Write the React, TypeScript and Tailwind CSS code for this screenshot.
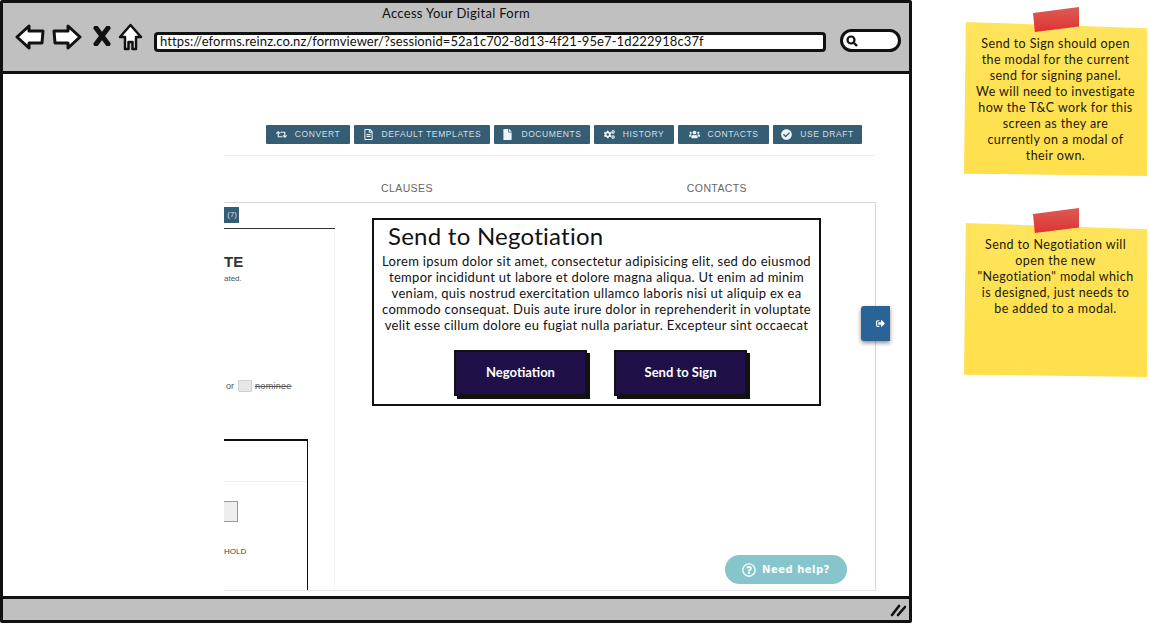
import { FaRetweet, FaRegFileAlt, FaFile, FaCogs, FaUsers, FaCheckCircle, FaSignOutAlt, FaRegQuestionCircle } from "react-icons/fa";
import type { ReactNode } from "react";

const sketch = { fontFamily: "Lato, 'Noto Sans', sans-serif" };
const liberation = { fontFamily: "'Liberation Sans', Arial, sans-serif" };

function ToolBtn({ icon, label, w }: { icon: ReactNode; label: string; w: string }) {
  return (
    <div className={`${w} h-[19px] bg-[#355e75] rounded-[1px] flex items-center justify-center gap-[8px] text-[#d5dfe5] text-[8.5px] tracking-[0.6px] whitespace-nowrap`}>
      <span className="text-[11px] text-[#eef3f6]">{icon}</span>
      <span>{label}</span>
    </div>
  );
}

function Note({ lines, mt, h }: { lines: string[]; mt: string; h: string }) {
  return (
    <div className={`relative ${mt} w-[183px] ${h}`}>
      <div className="absolute inset-0 bg-gradient-to-b from-[#ffe45c] via-[#ffe252] to-[#ffdf4c] [clip-path:polygon(1%_0,100%_4%,100%_100%,0_98.5%)]" />
      <div className="absolute left-[69px] top-[-15px] w-[46px] h-[25px] bg-gradient-to-b from-[#dd5a55] to-[#df2f2f] [clip-path:polygon(0_24%,100%_0,100%_78%,4%_100%)]" />
      <div className="relative pt-[14px] text-center text-[12.5px] leading-[16px] text-[#1c1a08] tracking-[0.4px]">
        {lines.map((l) => (
          <div key={l} className="whitespace-nowrap">{l}</div>
        ))}
      </div>
    </div>
  );
}

export default function App() {
  return (
    <div className="w-[1149px] h-[624px] bg-white flex overflow-hidden" style={sketch}>
      {/* browser window */}
      <div className="relative w-[912px] h-[623px] border-[3px] border-[#111] rounded-[2px] flex flex-col shrink-0">
        {/* top bar */}
        <div className="h-[71px] shrink-0 bg-[#c0c0c0] border-b-[3px] border-[#111] flex flex-col">
          <div className="h-[21px] pt-[1px] text-center text-[13px] leading-[18px] tracking-[0.3px] text-[#111]">Access Your Digital Form</div>
          <div className="flex items-center pl-[12px] h-[27px]">
            <svg width="30" height="28" viewBox="0 0 30 28" className="shrink-0 mb-[1px]">
              <path d="M2 14 L14 3 L14 8 L28 8 L27 20 L14 20 L14 25 Z" fill="#fff" stroke="#111" strokeWidth="3" strokeLinejoin="round" />
            </svg>
            <svg width="30" height="28" viewBox="0 0 30 28" className="ml-[7px] shrink-0 mb-[1px]">
              <path d="M28 14 L16 3 L16 8 L2 8 L3 20 L16 20 L16 25 Z" fill="#fff" stroke="#111" strokeWidth="3" strokeLinejoin="round" />
            </svg>
            <svg width="18" height="20" viewBox="0 0 18 20" className="ml-[11px] shrink-0 mb-[3px]">
              <path d="M3 2 L15 18 M15 2 L3 18" stroke="#111" strokeWidth="5" strokeLinecap="round" />
            </svg>
            <svg width="25" height="28" viewBox="0 0 25 28" className="ml-[7px] shrink-0 mb-[2px]">
              <path d="M12.5 2 L23 14 L18 14 L18 26 L14.5 26 L14.5 19 L10.5 19 L10.5 26 L7 26 L7 14 L2 14 Z" fill="#fff" stroke="#111" strokeWidth="2.5" strokeLinejoin="round" />
            </svg>
            <div className="ml-[11px] mt-[9px] w-[672px] h-[20px] bg-white border-[3px] border-[#111] rounded-[4px] flex items-center pl-[3px] text-[13px] tracking-[0.1px] text-[#111] whitespace-nowrap overflow-hidden">
              https://eforms.reinz.co.nz/formviewer/?sessionid=52a1c702-8d13-4f21-95e7-1d222918c37f
            </div>
            <div className="ml-[14px] mt-[6px] w-[61px] h-[23px] bg-white border-[3px] border-[#111] rounded-full flex items-center pl-[3px]">
              <svg width="12" height="12" viewBox="0 0 12 12">
                <circle cx="5" cy="5" r="3.5" fill="none" stroke="#111" strokeWidth="2.2" />
                <path d="M8 8 L11 11" stroke="#111" strokeWidth="2.4" />
              </svg>
            </div>
          </div>
        </div>

        {/* page body */}
        <div className="relative flex-1 bg-white overflow-hidden pl-[221px] pr-[33px] pt-[51px]" style={liberation}>
          <div className="flex justify-end gap-[4px] pr-[14px] pl-[42px]">
            <ToolBtn w="w-[84px]" label="CONVERT" icon={<FaRetweet />} />
            <ToolBtn w="w-[136px]" label="DEFAULT TEMPLATES" icon={<FaRegFileAlt />} />
            <ToolBtn w="w-[96px]" label="DOCUMENTS" icon={<FaFile />} />
            <ToolBtn w="w-[80px]" label="HISTORY" icon={<FaCogs />} />
            <ToolBtn w="w-[91px]" label="CONTACTS" icon={<FaUsers />} />
            <ToolBtn w="w-[89px]" label="USE DRAFT" icon={<FaCheckCircle />} />
          </div>
          <div className="mt-[11px] border-t border-[#eeeeee] w-[651px]" />
          <div className="h-[46px] w-[652px] flex items-end pb-[5px] text-[10.5px] text-[#666] tracking-[0.4px]">
            <span className="ml-[157px]">CLAUSES</span>
            <span className="ml-[254px]">CONTACTS</span>
          </div>
          {/* tab panel */}
          <div className="w-[652px] h-[388px] border-t border-r border-[#d9d9d9] flex flex-col relative">
            <div className="w-[111px] pt-[4px] h-[26px] border-b border-[#333]">
              <div className="w-[15px] h-[16px] bg-[#355e75] text-[#d5dfe5] text-[8px] leading-[16px] text-right pr-[2px]">(7)</div>
            </div>
            <div className="w-[111px] flex-1 border-r border-[#f3f3f3] flex flex-col relative">
              <div className="mt-[25px] text-[15px] leading-[16px] font-bold text-[#333]">TE</div>
              <div className="text-[8px] leading-[11px] mt-[3px] text-[#555]">ated.</div>
              <div className="mt-[96px] flex items-center text-[9px] leading-[12px] text-[#555] pl-[2px]">
                or
                <span className="ml-[4px] w-[14px] h-[12px] bg-[#e7e7e7] border border-[#cfcfcf] rounded-[1px]" />
                <span className="ml-[3px] line-through tracking-[0.3px]">nominee</span>
              </div>
              {/* lower box */}
              <div className="mt-[47px] w-[84px] flex-1 border-t-2 border-r border-[#111] relative">
                <div className="mt-[40px] border-t border-[#f2f2f2]" />
                <div className="mt-[19px] w-[14px] h-[21px] bg-[#eeeeee] border-y border-r border-[#999]" />
                <div className="mt-[24px] text-[8px] leading-[12px] text-[#444]">HOLD</div>
              </div>
            </div>
          </div>
          <div className="border-t border-[#e5e5e5] w-[652px]" />

          {/* modal */}
          <div className="absolute left-[369px] top-[144px] w-[449px] h-[188px] bg-white border-2 border-[#111] text-[#111]" style={sketch}>
            <div className="pl-[14px] pt-[1px] text-[24px] leading-[29px] tracking-[0.25px]">Send to Negotiation</div>
            <div className="mt-[3px] text-center text-[13px] leading-[16px] tracking-[0.3px]">
              <div className="whitespace-nowrap">Lorem ipsum dolor sit amet, consectetur adipisicing elit, sed do eiusmod</div>
              <div className="whitespace-nowrap">tempor incididunt ut labore et dolore magna aliqua. Ut enim ad minim</div>
              <div className="whitespace-nowrap">veniam, quis nostrud exercitation ullamco laboris nisi ut aliquip ex ea</div>
              <div className="whitespace-nowrap">commodo consequat. Duis aute irure dolor in reprehenderit in voluptate</div>
              <div className="whitespace-nowrap">velit esse cillum dolore eu fugiat nulla pariatur. Excepteur sint occaecat</div>
            </div>
            <div className="mt-[17px] pl-[80px] flex gap-[27px]">
              <div className="w-[133px] h-[46px] bg-[#1f1147] border-2 border-[#111] shadow-[3px_3px_0_#111] flex items-center justify-center text-white text-[13px] font-bold">Negotiation</div>
              <div className="w-[133px] h-[46px] bg-[#1f1147] border-2 border-[#111] shadow-[3px_3px_0_#111] flex items-center justify-center text-white text-[13px] font-bold">Send to Sign</div>
            </div>
          </div>

          {/* side tab */}
          <div className="absolute left-[858px] top-[232px] w-[29px] h-[35px] bg-[#2a6496] rounded-l-[3px] shadow-[0_2px_4px_rgba(0,0,0,0.45)] flex items-center justify-end pr-[5px] text-white text-[9px]">
            <FaSignOutAlt />
          </div>

          {/* help pill */}
          <div className="absolute left-[722px] top-[481px] w-[122px] h-[29px] rounded-full bg-[#86c5cc] flex items-center justify-center gap-[6px] text-white text-[11px] font-bold tracking-[0.5px]" style={{ fontFamily: "'DejaVu Sans', sans-serif" }}>
            <FaRegQuestionCircle className="text-[14px]" />
            <span className="text-[10px]">Need help?</span>
          </div>
        </div>

        {/* bottom bar */}
        <div className="h-[24px] shrink-0 bg-[#c0c0c0] border-t-[3px] border-[#111] flex items-center justify-end pr-[3px]">
          <svg width="16" height="14" viewBox="0 0 16 14">
            <path d="M2 12 L9 3 M8 12 L15 4" stroke="#111" strokeWidth="2.6" strokeLinecap="round" />
          </svg>
        </div>
      </div>

      {/* notes */}
      <div className="flex flex-col pl-[52px] pt-[22px]">
        <Note
          mt="mt-0"
          h="h-[154px]"
          lines={[
            "Send to Sign should open",
            "the modal for the current",
            "send for signing panel.",
            "We will need to investigate",
            "how the T&C work for this",
            "screen as they are",
            "currently on a modal of",
            "their own.",
          ]}
        />
        <Note
          mt="mt-[47px]"
          h="h-[154px]"
          lines={[
            "Send to Negotiation will",
            "open the new",
            "\"Negotiation\" modal which",
            "is designed, just needs to",
            "be added to a modal.",
          ]}
        />
      </div>
    </div>
  );
}
